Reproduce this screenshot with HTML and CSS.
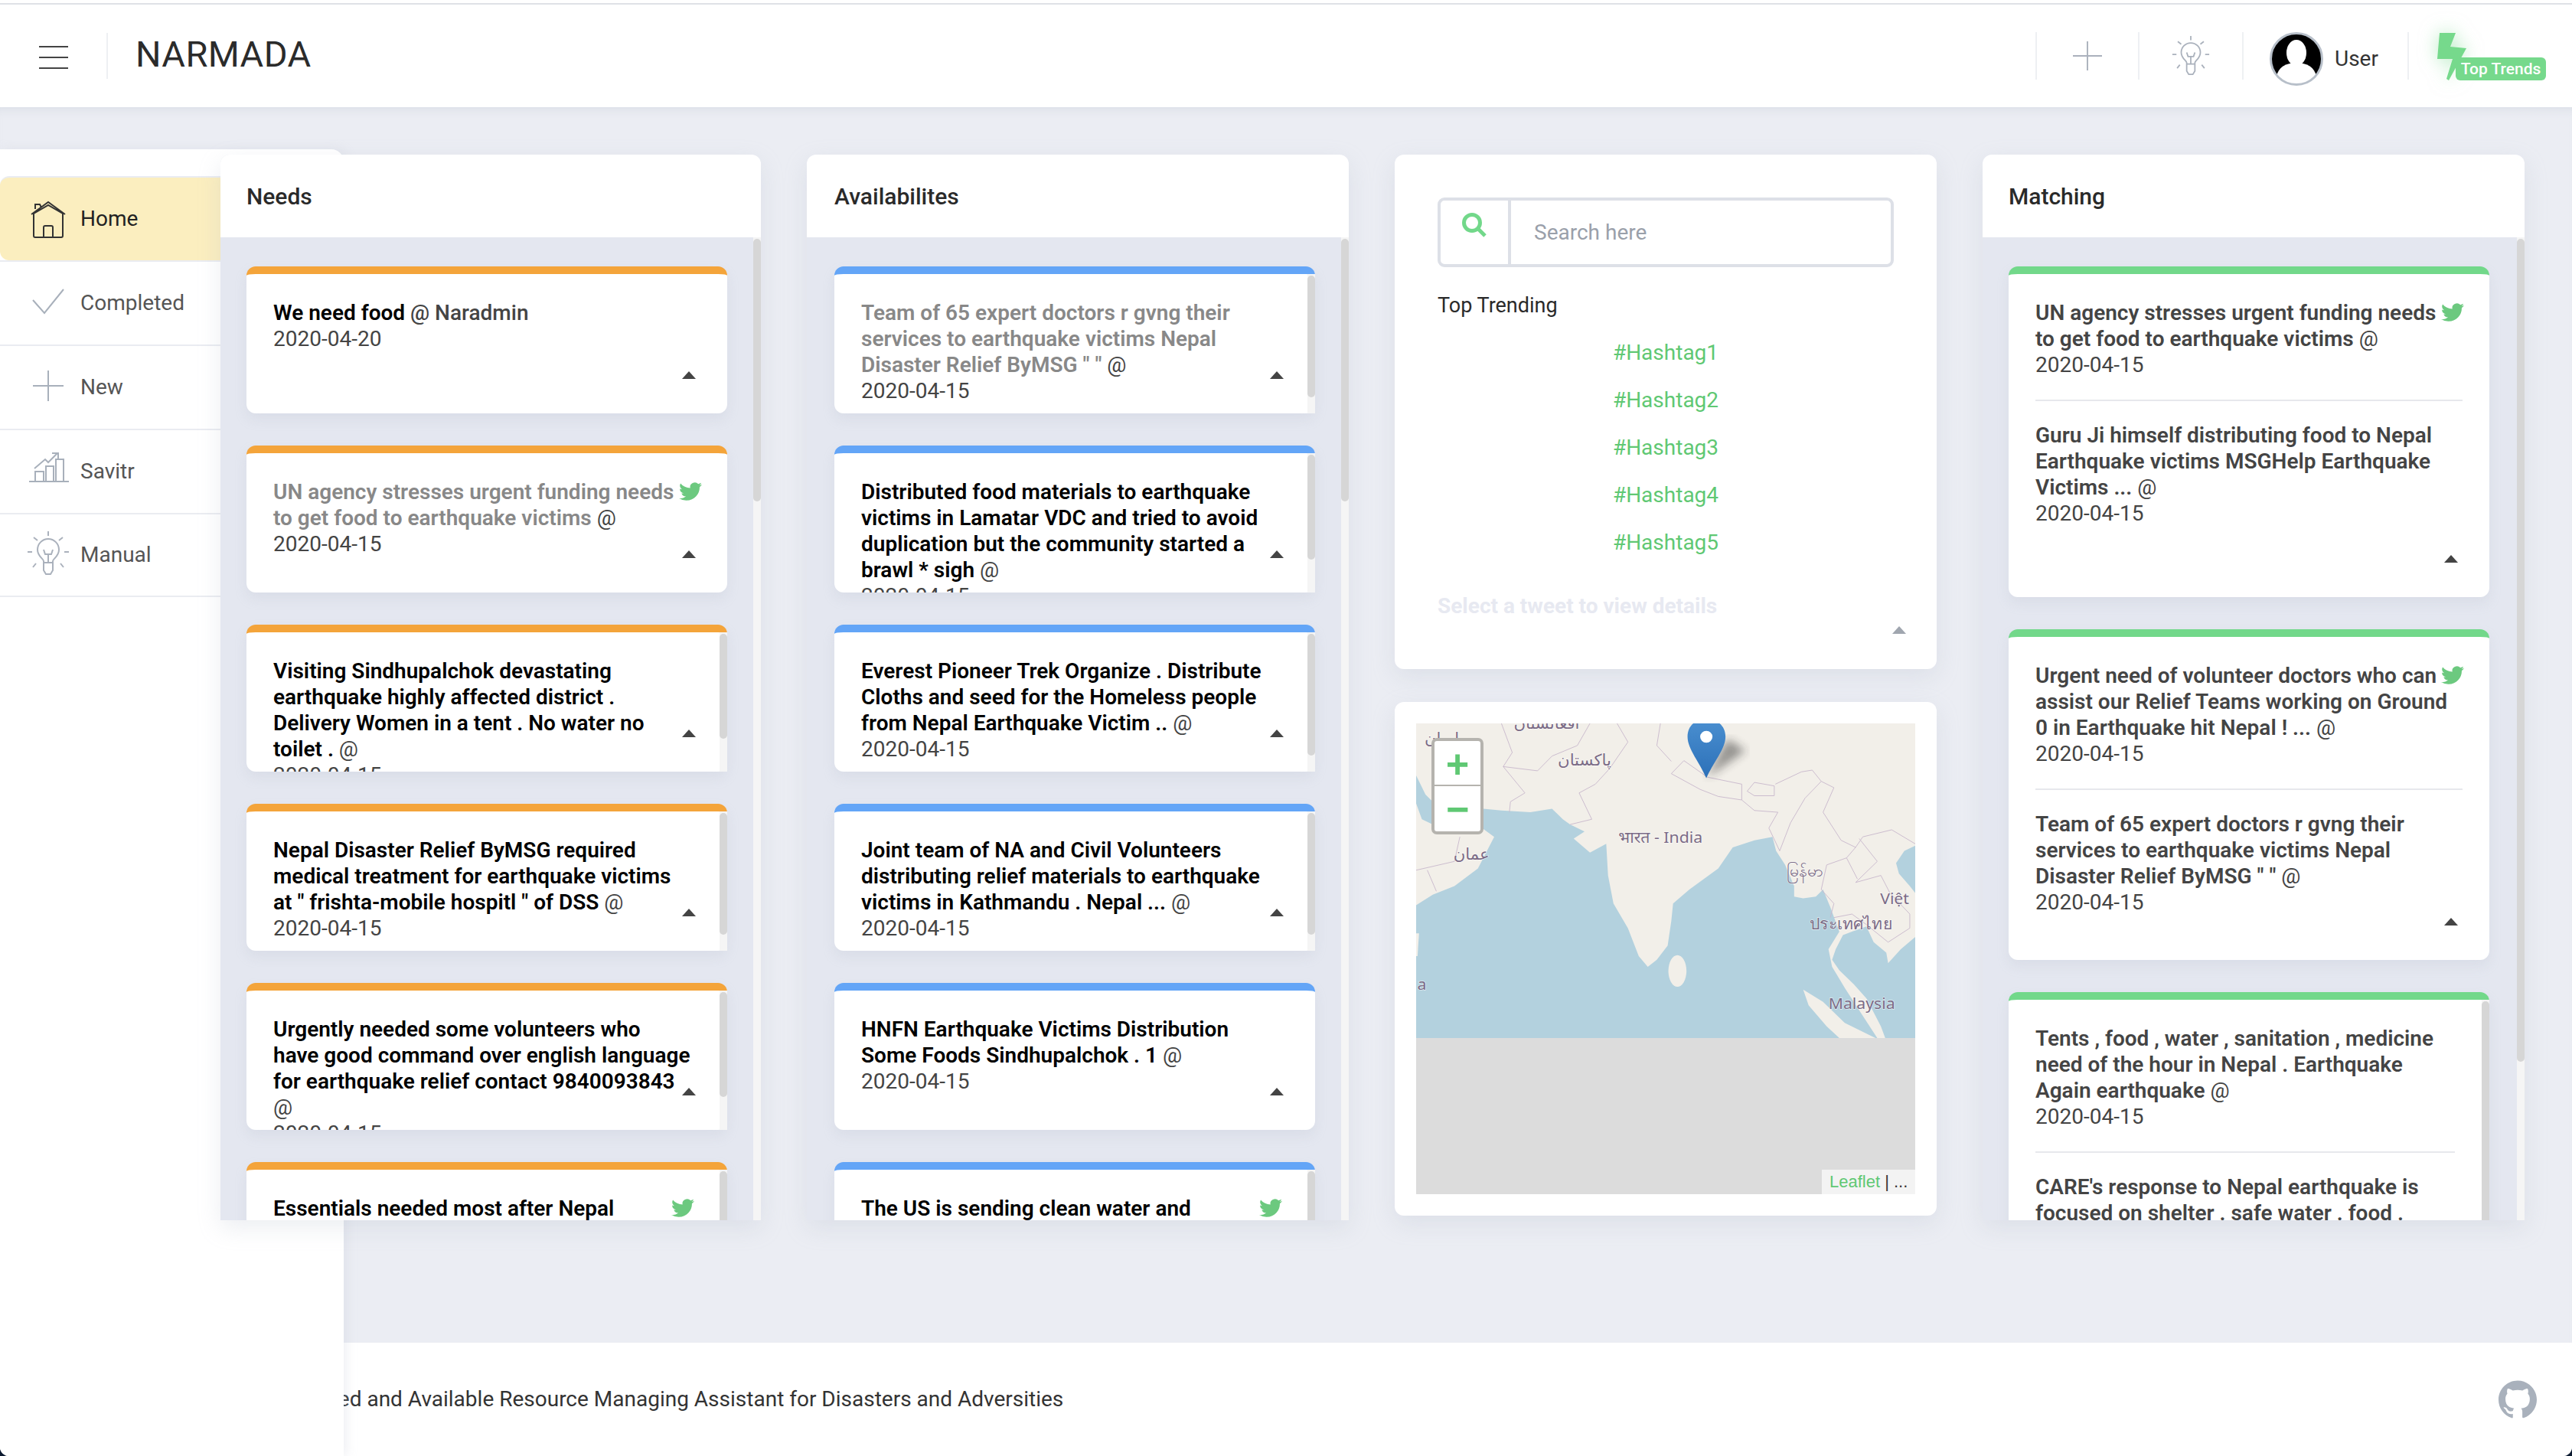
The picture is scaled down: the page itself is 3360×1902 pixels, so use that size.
FILE: index.html
```html
<!DOCTYPE html>
<html lang="en">
<head>
    <meta charset="UTF-8">
    <meta name="viewport" content="width=device-width, initial-scale=1.0">
    <title>Narmada</title>
    <link rel="stylesheet" href="styles.css">
</head>
<body>
    <svg class="defs" width="0" height="0">
        <symbol id="bird" viewBox="0 2 24 20" preserveAspectRatio="none">
            <path d="M23.953 4.57a10 10 0 01-2.825.775 4.958 4.958 0 002.163-2.723c-.951.555-2.005.959-3.127 1.184a4.92 4.92 0 00-8.384 4.482C7.69 8.095 4.067 6.13 1.64 3.162a4.822 4.822 0 00-.666 2.475c0 1.71.87 3.213 2.188 4.096a4.904 4.904 0 01-2.228-.616v.06a4.923 4.923 0 003.946 4.827 4.996 4.996 0 01-2.212.085 4.936 4.936 0 004.604 3.417 9.867 9.867 0 01-6.102 2.105c-.39 0-.779-.023-1.17-.067a13.995 13.995 0 007.557 2.209c9.053 0 13.998-7.496 13.998-13.985 0-.21 0-.42-.015-.63A9.935 9.935 0 0024 4.59z"/>
        </symbol>
        <symbol id="bulb" viewBox="0 0 56 58">
            <path d="M28 0v6M9 8l5 4M47 8l-5 4M1 27h6M49 27h6M8 47l4-5M48 47l-4-5"/>
            <path d="M22 41v-2c0-3-8-6-8-15a14 14 0 0128 0c0 9-8 12-8 15v2zM22 41v10l3 5h6l3-5V41M22 24l2 6h8l2-6M28 30v11"/>
        </symbol>
        <symbol id="plus" viewBox="0 0 40 40">
            <path d="M0 20h40M20 0v40"/>
        </symbol>
    </svg>

    <div class="top-rule"></div>
    <header class="navbar">
        <div class="burger"><span></span><span></span><span></span></div>
        <h1 class="brand">NARMADA</h1>
        <div class="nav-right">
            <div class="nav-cell nav-add"><svg class="line-icon" width="38" height="38"><use href="#plus"/></svg></div>
            <div class="nav-cell nav-tip"><svg class="line-icon" width="50" height="52"><use href="#bulb"/></svg></div>
            <div class="nav-cell nav-user">
                <svg class="avatar" viewBox="0 0 70 70" width="70" height="70">
                    <circle cx="35" cy="35" r="33.5" fill="#000"/>
                    <ellipse cx="35" cy="27" rx="13" ry="17" fill="#fff"/>
                    <path d="M9 58c2-12 12-18 26-18s24 6 26 18c-7 7-16 10-26 10S16 65 9 58z" fill="#fff"/>
                    <circle cx="35" cy="35" r="33.5" fill="none" stroke="#b7bfc9" stroke-width="3"/>
                </svg>
                <span>User</span>
            </div>
            <div class="nav-cell nav-trends">
                <div class="trends">
                    <svg class="bolt" viewBox="0 0 41 63" width="41" height="63"><path d="M5 1h21l-7 18 21 2-23 42-3-2 8-26H2z"/></svg>
                    <span class="trends-badge">Top Trends</span>
                </div>
            </div>
        </div>
    </header>

    <aside class="sidebar">
        <a class="side-item active">
            <svg class="side-icon side-dark" viewBox="0 0 56 50" width="56" height="50">
                <path d="M6 19L28 3l22 16M9 19v-1L28 7l19 11v1M9 17v30a2 2 0 002 2h34a2 2 0 002-2V17M22 49V36a2 2 0 012-2h8a2 2 0 012 2v13M11 12V6h6l2 4"/>
            </svg>
            Home
        </a>
        <a class="side-item">
            <svg class="side-icon" viewBox="0 0 56 50" width="56" height="50"><path d="M8 21l15 17L48 7"/></svg>
            Completed
        </a>
        <a class="side-item">
            <svg class="side-icon" viewBox="0 0 56 50" width="56" height="50"><path d="M8 23h40M28 3v40"/></svg>
            New
        </a>
        <a class="side-item">
            <svg class="side-icon" viewBox="0 0 56 50" width="56" height="50">
                <path d="M3 38h52M11 38V25h11v13M25 38V18h10v20M38 38V9h10v29M10 21L24 9l4 4L40 1M33 1h8v7"/>
            </svg>
            Savitr
        </a>
        <a class="side-item">
            <svg class="side-bulb line-icon" width="56" height="58"><use href="#bulb"/></svg>
            Manual
        </a>
    </aside>

    <main class="board">
        <section class="panel">
            <h2 class="panel-title">Needs</h2>
            <div class="panel-list">
                <article class="card need">
                    <div class="card-body">
                        <p class="tweet"><b>We need food</b> <span class="who">@ Naradmin</span></p>
                        <p class="date">2020-04-20</p>
                    </div>
                    <i class="caret"></i>
                </article>
                <article class="card need">
                    <div class="card-body">
                        <svg class="bird"><use href="#bird"/></svg>
                        <p class="tweet read"><b>UN agency stresses urgent funding needs to get food to earthquake victims</b> @</p>
                        <p class="date">2020-04-15</p>
                    </div>
                    <i class="caret"></i>
                </article>
                <article class="card need scrolls">
                    <div class="card-body">
                        <p class="tweet"><b>Visiting Sindhupalchok devastating earthquake highly affected district . Delivery Women in a tent . No water no toilet .</b> @</p>
                        <p class="date">2020-04-15</p>
                    </div>
                    <i class="caret"></i>
                    <div class="scrollbar"><div class="thumb" style="height: 137px"></div></div>
                </article>
                <article class="card need scrolls">
                    <div class="card-body">
                        <p class="tweet"><b>Nepal Disaster Relief ByMSG required medical treatment for earthquake victims at " frishta-mobile hospitl " of DSS</b> @</p>
                        <p class="date">2020-04-15</p>
                    </div>
                    <i class="caret"></i>
                    <div class="scrollbar"><div class="thumb" style="height: 159px"></div></div>
                </article>
                <article class="card need scrolls">
                    <div class="card-body">
                        <p class="tweet"><b>Urgently needed some volunteers who<br>have good command over english language for earthquake relief contact 9840093843</b><br>@</p>
                        <p class="date">2020-04-15</p>
                    </div>
                    <i class="caret"></i>
                    <div class="scrollbar"><div class="thumb" style="height: 137px"></div></div>
                </article>
                <article class="card need scrolls">
                    <div class="card-body">
                        <svg class="bird"><use href="#bird"/></svg>
                        <p class="tweet"><b>Essentials needed most after Nepal</b></p>
                    </div>
                    <div class="scrollbar"><div class="thumb" style="height: 137px"></div></div>
                </article>
            </div>
            <div class="scrollbar"><div class="thumb" style="height: 343px"></div></div>
        </section>

        <section class="panel panel-avail">
            <h2 class="panel-title">Availabilites</h2>
            <div class="panel-list">
                <article class="card avail scrolls">
                    <div class="card-body">
                        <p class="tweet read"><b>Team of 65 expert doctors r gvng their services to earthquake victims Nepal Disaster Relief ByMSG " "</b> @</p>
                        <p class="date">2020-04-15</p>
                    </div>
                    <i class="caret"></i>
                    <div class="scrollbar"><div class="thumb" style="height: 159px"></div></div>
                </article>
                <article class="card avail scrolls">
                    <div class="card-body">
                        <p class="tweet"><b>Distributed food materials to earthquake victims in Lamatar VDC and tried to avoid duplication but the community started a brawl * sigh</b> @</p>
                        <p class="date">2020-04-15</p>
                    </div>
                    <i class="caret"></i>
                    <div class="scrollbar"><div class="thumb" style="height: 137px"></div></div>
                </article>
                <article class="card avail scrolls">
                    <div class="card-body">
                        <p class="tweet"><b>Everest Pioneer Trek Organize . Distribute Cloths and seed for the Homeless people from Nepal Earthquake Victim ..</b> @</p>
                        <p class="date">2020-04-15</p>
                    </div>
                    <i class="caret"></i>
                    <div class="scrollbar"><div class="thumb" style="height: 159px"></div></div>
                </article>
                <article class="card avail scrolls">
                    <div class="card-body">
                        <p class="tweet"><b>Joint team of NA and Civil Volunteers distributing relief materials to earthquake victims in Kathmandu . Nepal ...</b> @</p>
                        <p class="date">2020-04-15</p>
                    </div>
                    <i class="caret"></i>
                    <div class="scrollbar"><div class="thumb" style="height: 159px"></div></div>
                </article>
                <article class="card avail">
                    <div class="card-body">
                        <p class="tweet"><b>HNFN Earthquake Victims Distribution<br>Some Foods Sindhupalchok . 1</b> @</p>
                        <p class="date">2020-04-15</p>
                    </div>
                    <i class="caret"></i>
                </article>
                <article class="card avail scrolls">
                    <div class="card-body">
                        <svg class="bird"><use href="#bird"/></svg>
                        <p class="tweet"><b>The US is sending clean water and</b></p>
                    </div>
                    <div class="scrollbar"><div class="thumb" style="height: 137px"></div></div>
                </article>
            </div>
            <div class="scrollbar"><div class="thumb" style="height: 343px"></div></div>
        </section>

        <div class="middle">
            <section class="box trending">
                <div class="search">
                    <span class="search-btn">
                        <svg viewBox="0 0 32 32" width="32" height="32"><circle cx="13" cy="13" r="10.5"/><path d="M20 20l10 10"/></svg>
                    </span>
                    <input class="search-input" type="text" placeholder="Search here">
                </div>
                <h3 class="trend-title">Top Trending</h3>
                <ul class="tags">
                    <li>#Hashtag1</li>
                    <li>#Hashtag2</li>
                    <li>#Hashtag3</li>
                    <li>#Hashtag4</li>
                    <li>#Hashtag5</li>
                </ul>
                <p class="hint">Select a tweet to view details</p>
                <i class="caret caret-muted"></i>
            </section>

            <section class="box map-box">
                <div class="map">
                    <svg class="tiles" viewBox="64 97 1381 896" preserveAspectRatio="none">
                        <defs>
                            <filter id="soft"><feGaussianBlur stdDeviation="13"/></filter>
                            <linearGradient id="pin" x1="0" y1="0" x2="0" y2="1">
                                <stop offset="0" stop-color="#4a8fd0"/>
                                <stop offset="1" stop-color="#2c70b8"/>
                            </linearGradient>
                        </defs>
                        <rect x="64" y="97" width="1381" height="896" fill="#b3d1de"/>
                        <path class="land" d="M64 97H1445V445L1415 460 1392 495 1400 525 1430 560 1445 580V705L1405 740 1370 780 1365 750 1330 720 1310 675 1270 690 1245 700 1225 740 1215 770 1235 800 1275 840 1310 880 1350 960 1362 993H1340L1300 930 1250 850 1215 790 1205 740 1235 690 1210 620 1190 570 1170 590 1135 595 1110 590 1110 560 1085 500 1060 460 1050 420 1000 430 940 450 900 510 820 570 775 610 770 660 760 730 730 770 705 790 680 760 650 680 610 610 595 530 590 440 545 465 500 425 530 405 490 385 470 370 440 340 380 350 300 345 250 340 120 330 90 300 64 245z"/>
                        <path class="land" d="M64 325L80 370 110 385 170 410 240 390 280 420 235 510 170 560 110 585 64 615z"/>
                        <path class="land" d="M1135 855L1190 890 1250 950 1335 993H1235L1200 960 1150 900z"/>
                        <path class="land" d="M64 695H72L68 760H64z"/>
                        <ellipse class="land" cx="787" cy="802" rx="25" ry="45"/>
                        <path class="border" d="M770 240L805 203 870 250 965 270 965 315 900 305 850 285zM980 290L1000 265 1055 275 1055 303 1000 303z"/>
                        <path class="border" d="M620 97L650 150 600 225 560 270 515 295 550 370 490 385M300 97L330 180 305 220 365 295 325 320 322 350M305 220L400 232 440 190 510 160 545 97M740 97L730 160 770 205M1058 270L1130 235 1160 230 1185 262 1220 280 1190 350 1240 430 1280 450 1255 480 1200 500 1185 570 1220 610 1210 650M965 315L1000 345 1065 350 1040 395 1070 460 1100 380 1140 310 1185 262M1280 450L1300 420 1380 400 1445 440M1290 425L1340 490 1280 550 1350 530 1375 580 1430 640 1430 680 1370 720 1310 670 1270 640 1220 650M1255 480L1285 540M64 515L170 490 185 420M95 515L120 575"/>
                        <text class="place" x="135" y="155" text-anchor="middle">ایران</text>
                        <text class="place" x="425" y="112" text-anchor="middle">افغانستان</text>
                        <text class="place" x="530" y="216" text-anchor="middle">پاکستان</text>
                        <text class="place" x="740" y="438" text-anchor="middle">भारत - India</text>
                        <text class="place" x="217" y="486" text-anchor="middle">عمان</text>
                        <text class="place" x="1140" y="534" text-anchor="middle">မြန်မာ</text>
                        <text class="place" x="1388" y="612" text-anchor="middle">Việt</text>
                        <text class="place" x="1267" y="684" text-anchor="middle">ประเทศไทย</text>
                        <text class="place" x="1297" y="911" text-anchor="middle">Malaysia</text>
                        <text class="place" x="80" y="856" text-anchor="middle">a</text>
                        <path d="M867 253L975 175 925 140z" fill="#222" opacity=".45" filter="url(#soft)"/>
                        <path d="M867 253C850 210 815 170 815 135 815 105 835 85 867 85 899 85 920 105 920 135 920 170 885 210 867 253z" fill="url(#pin)"/>
                        <circle cx="867" cy="135" r="17" fill="#fff"/>
                    </svg>
                    <div class="zoom">
                        <a class="zoom-in">+</a>
                        <a class="zoom-out">−</a>
                    </div>
                    <div class="attribution"><span class="leaflet">Leaflet</span> | ...</div>
                </div>
            </section>
        </div>

        <section class="panel panel-match">
            <h2 class="panel-title">Matching</h2>
            <div class="panel-list">
                <article class="card match">
                    <div class="card-body">
                        <svg class="bird"><use href="#bird"/></svg>
                        <p class="tweet"><b>UN agency stresses urgent funding needs to get food to earthquake victims</b> @</p>
                        <p class="date">2020-04-15</p>
                        <hr class="rule">
                        <p class="tweet"><b>Guru Ji himself distributing food to Nepal Earthquake victims MSGHelp Earthquake Victims ...</b> @</p>
                        <p class="date">2020-04-15</p>
                    </div>
                    <i class="caret caret-low"></i>
                </article>
                <article class="card match">
                    <div class="card-body">
                        <svg class="bird"><use href="#bird"/></svg>
                        <p class="tweet"><b>Urgent need of volunteer doctors who can assist our Relief Teams working on Ground 0 in Earthquake hit Nepal ! ...</b> @</p>
                        <p class="date">2020-04-15</p>
                        <hr class="rule">
                        <p class="tweet"><b>Team of 65 expert doctors r gvng their services to earthquake victims Nepal Disaster Relief ByMSG " "</b> @</p>
                        <p class="date">2020-04-15</p>
                    </div>
                    <i class="caret caret-low"></i>
                </article>
                <article class="card match scrolls">
                    <div class="card-body">
                        <p class="tweet"><b>Tents , food , water , sanitation , medicine need of the hour in Nepal . Earthquake Again earthquake</b> @</p>
                        <p class="date">2020-04-15</p>
                        <hr class="rule">
                        <p class="tweet"><b>CARE's response to Nepal earthquake is focused on shelter . safe water . food .</b></p>
                    </div>
                    <div class="scrollbar"><div class="thumb" style="height: 300px"></div></div>
                </article>
            </div>
            <div class="scrollbar"><div class="thumb" style="height: 1075px"></div></div>
        </section>
    </main>

    <footer class="footer">
        <span class="footer-text">Need and Available Resource Managing Assistant for Disasters and Adversities</span>
        <svg class="github" viewBox="0 0 24 24" width="50" height="50">
            <path d="M12 .297c-6.63 0-12 5.373-12 12 0 5.303 3.438 9.8 8.205 11.385.6.113.82-.258.82-.577 0-.285-.01-1.04-.015-2.04-3.338.724-4.042-1.61-4.042-1.61C4.422 18.07 3.633 17.7 3.633 17.7c-1.087-.744.084-.729.084-.729 1.205.084 1.838 1.236 1.838 1.236 1.07 1.835 2.809 1.305 3.495.998.108-.776.417-1.305.76-1.605-2.665-.3-5.466-1.332-5.466-5.93 0-1.31.465-2.38 1.235-3.22-.135-.303-.54-1.523.105-3.176 0 0 1.005-.322 3.3 1.23.96-.267 1.98-.399 3-.405 1.02.006 2.04.138 3 .405 2.28-1.552 3.285-1.23 3.285-1.23.645 1.653.24 2.873.12 3.176.765.84 1.23 1.91 1.23 3.22 0 4.61-2.805 5.625-5.475 5.92.42.36.81 1.096.81 2.22 0 1.606-.015 2.896-.015 3.286 0 .315.21.69.825.57C20.565 22.092 24 17.592 24 12.297c0-6.627-5.373-12-12-12"/>
        </svg>
    </footer>
</body>
</html>
```

FILE: styles.css
```css
* {
    box-sizing: border-box;
}
html {
    height: 100%;
    overflow: hidden;
    background: #0c1a30;
}
body {
    position: relative;
    margin: 0;
    height: 100%;
    overflow: hidden;
    display: flex;
    flex-direction: column;
    border-radius: 0 0 12px 12px;
    background: #fff;
    color: #222;
    font-family: Roboto, "Liberation Sans", sans-serif;
    font-size: 28px;
    line-height: 34px;
}
h1, h2, h3, p, ul {
    margin: 0;
    padding: 0;
    font-weight: 400;
}
.defs {
    position: absolute;
}
.top-rule {
    height: 2px;
    margin-top: 4px;
    background: #dfe1e6;
}
.navbar {
    height: 134px;
    display: flex;
    align-items: center;
    background: #fff;
}
.burger {
    width: 141px;
    height: 60px;
    padding: 3px 0 0 51px;
    border-right: 2px solid #eef0f3;
    display: flex;
    flex-direction: column;
    justify-content: center;
    gap: 12px;
}
.burger span {
    width: 38px;
    height: 2px;
    background: #444;
}
.brand {
    margin: 0 0 4px 36px;
    font-size: 47px;
    letter-spacing: .4px;
    line-height: 60px;
    color: #2b2b2b;
}
.nav-right {
    margin-left: auto;
    height: 62px;
    display: flex;
}
.nav-cell {
    display: flex;
    align-items: center;
    justify-content: center;
    border-left: 2px solid #eef0f3;
}
.nav-add {
    width: 134px;
}
.nav-tip {
    width: 136px;
}
.nav-user {
    width: 216px;
    gap: 15px;
    justify-content: flex-start;
    padding-left: 34px;
}
.avatar {
    flex: none;
    margin-top: 8px;
}
.nav-user span {
    margin-top: 8px;
    color: #333;
}
.nav-trends {
    width: 215px;
    padding: 0 34px 0 35px;
}
.trends {
    position: relative;
    width: 146px;
    height: 63px;
}
.bolt {
    display: block;
    fill: #76d98c;
    filter: drop-shadow(0 0 12px rgba(118, 217, 140, .55));
}
.trends-badge {
    position: absolute;
    right: 0;
    bottom: 0;
    width: 118px;
    height: 30px;
    border-radius: 6px;
    background: #76d98c;
    color: #fff;
    font-size: 21px;
    font-weight: 500;
    line-height: 30px;
    text-align: center;
}
.line-icon {
    fill: none;
    stroke: #aab1bc;
    stroke-width: 2;
}

.sidebar {
    position: absolute;
    left: 0;
    top: 195px;
    bottom: 0;
    z-index: 2;
    width: 449px;
    padding-top: 35px;
    background: #fff;
    border-top-right-radius: 16px;
    box-shadow: 4px 0 14px rgba(190, 195, 210, .25);
}
.side-item {
    height: 110px;
    display: flex;
    align-items: center;
    gap: 14px;
    padding-left: 35px;
    border-top: 2px solid #eaecf1;
    color: #555;
}
.side-item:last-child {
    border-bottom: 2px solid #eaecf1;
}
.side-item.active {
    background: #fbeebf;
    border-radius: 12px;
    color: #222;
}
.side-icon {
    flex: none;
    fill: none;
    stroke: #a8b0bb;
    stroke-width: 2;
}
.side-dark {
    stroke: #333;
}
.side-bulb {
    flex: none;
    margin-top: -4px;
}

.board {
    flex: 1;
    display: grid;
    grid-template-columns: 706px 708px 708px 708px;
    gap: 60px;
    padding: 62px 0 160px 288px;
    background: #ebedf3;
    box-shadow: inset 0 12px 14px -12px rgba(190, 195, 210, .5);
}
.panel {
    position: relative;
    z-index: 3;
    height: 1392px;
    display: flex;
    flex-direction: column;
    background: #e4e7f0;
    border-radius: 12px 12px 0 0;
    box-shadow: 0 10px 30px rgba(170, 176, 195, .22);
}
.panel-title {
    height: 108px;
    flex: none;
    padding: 38px 34px 0;
    background: #fff;
    border-radius: 12px 12px 0 0;
    font-size: 30px;
    font-weight: 500;
    color: #2a2a2a;
}
.panel-list {
    flex: 1;
    min-height: 0;
    overflow: hidden;
    padding: 38px 44px 0 34px;
}
.panel-avail .panel-title {
    padding-left: 36px;
}
.panel-avail .panel-list {
    padding-left: 36px;
}
.panel-match .panel-list {
    padding-right: 46px;
}
/* scrollbars are hidden in the capture, so they are plain elements here */
.scrollbar {
    position: absolute;
    top: 0;
    right: 0;
    bottom: 0;
    width: 10px;
    background: #f5f5f5;
}
.thumb {
    margin-top: 2px;
    border-radius: 5px;
    background: #d6d6d6;
}
.panel > .scrollbar {
    top: 108px;
}
.card {
    position: relative;
    height: 192px;
    margin-bottom: 42px;
    background: #fff;
    border-top: 10px solid;
    border-radius: 12px;
    box-shadow: 0 8px 16px rgba(170, 176, 195, .18);
}
.need {
    border-top-color: #f4a43a;
}
.avail {
    border-top-color: #63a5f7;
}
.match {
    height: 432px;
    border-top-color: #72d88a;
}
.card-body {
    height: 100%;
    overflow: hidden;
    padding: 34px 35px 0;
    border-radius: 0 0 12px 12px;
}
.scrolls .card-body {
    padding-right: 45px;
}
.bird {
    float: right;
    width: 30px;
    height: 24px;
    margin: 4px -2px 0 5px;
    fill: #6cc97f;
}
.tweet {
    font-size: 28px;
    color: #444;
}
.tweet b {
    font-weight: 600;
    color: #000;
}
.tweet.read b {
    color: #888;
}
.match .tweet b {
    color: #444;
}
.who {
    font-weight: 500;
}
.date {
    color: #444;
}
.rule {
    margin: 28px 0;
    border: 0;
    border-top: 2px solid #e7e8ec;
}
.caret {
    position: absolute;
    top: 127px;
    right: 41px;
    border: 9px solid transparent;
    border-top: 0;
    border-bottom: 10px solid #444;
}
.caret-low {
    top: 367px;
}
.caret-muted {
    top: 616px;
    right: 40px;
    border-bottom-color: #a0a6af;
}

.middle {
    display: flex;
    flex-direction: column;
    gap: 43px;
    height: 1386px;
}
.box {
    position: relative;
    z-index: 3;
    height: 672px;
    background: #fff;
    border-radius: 12px;
    box-shadow: 0 10px 30px rgba(170, 176, 195, .22);
}
.trending {
    padding: 56px 56px 0;
}
.search {
    height: 91px;
    display: flex;
    border: 4px solid #dde0e7;
    border-radius: 9px;
}
.search-btn {
    width: 92px;
    flex: none;
    padding: 16px 0 0 28px;
    border-right: 4px solid #dde0e7;
}
.search-btn svg {
    fill: none;
    stroke: #72d88a;
    stroke-width: 5;
}
.search-input {
    flex: 1;
    min-width: 0;
    border: 0;
    outline: 0;
    padding: 0 0 0 30px;
    font: inherit;
    background: transparent;
}
.search-input::placeholder {
    color: #9aa0aa;
}
.trend-title {
    margin-top: 33px;
    font-size: 27px;
    color: #2a2a2a;
}
.tags {
    margin-top: 28px;
    list-style: none;
    text-align: center;
    color: #5fc873;
}
.tags li {
    height: 62px;
    line-height: 34px;
}
.hint {
    margin-top: 21px;
    font-weight: 700;
    color: #e7e9f1;
}
.map-box {
    height: 671px;
    padding: 28px;
}
.map {
    position: relative;
    height: 615px;
    background: #dcdcdc;
}
.tiles {
    display: block;
    width: 100%;
    height: 411px;
}
.land {
    fill: #f2efe9;
}
.border {
    fill: none;
    stroke: #c9b9cc;
    stroke-width: 2;
}
.place {
    font-family: "Noto Sans", "DejaVu Sans", sans-serif;
    font-size: 45px;
    fill: #7b6b86;
    stroke: #fff;
    stroke-width: 3;
    stroke-opacity: .6;
    paint-order: stroke;
}
.zoom {
    position: absolute;
    left: 20px;
    top: 19px;
    width: 68px;
    border: 4px solid #b5b3ae;
    border-radius: 7px;
    background: #fff;
}
.zoom a {
    display: block;
    height: 59px;
    overflow: hidden;
    font-family: "Liberation Mono", monospace;
    font-size: 52px;
    font-weight: 700;
    line-height: 70px;
    text-align: center;
    color: #5fc873;
}
.zoom-in {
    border-bottom: 2px solid #b5b3ae;
}
.attribution {
    position: absolute;
    right: 0;
    bottom: 0;
    width: 122px;
    height: 32px;
    padding-left: 10px;
    background: #f3f3f3;
    font-family: "Liberation Sans", sans-serif;
    font-size: 22px;
    line-height: 32px;
    color: #333;
}
.leaflet {
    color: #5fc873;
}

.footer {
    flex: none;
    height: 148px;
    display: flex;
    align-items: center;
    padding: 0 46px 0 407px;
    background: #fff;
    position: relative;
    z-index: 1;
}
.footer-text {
    color: #333;
}
.github {
    margin-left: auto;
    fill: #a9b1bc;
}
```
